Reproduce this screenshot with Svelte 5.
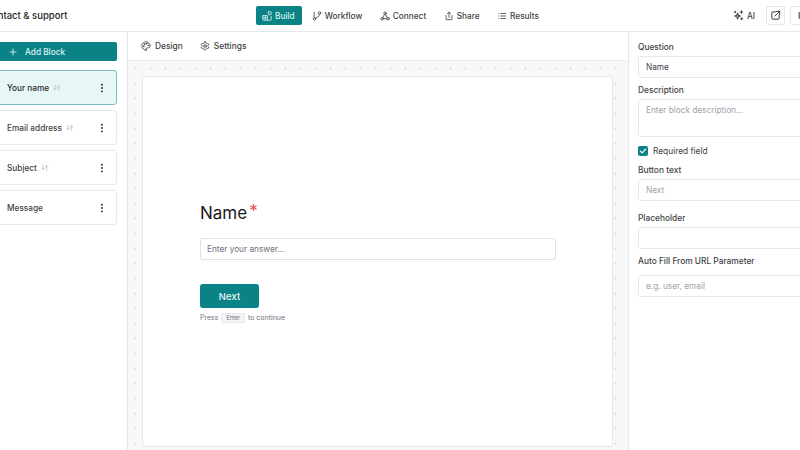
<script lang="ts">
  const tabs = [
    { label: "Build", icon: "build", active: true },
    { label: "Workflow", icon: "workflow", active: false },
    { label: "Connect", icon: "connect", active: false },
    { label: "Share", icon: "share", active: false },
    { label: "Results", icon: "results", active: false },
  ];

  const blocks = [
    { name: "Your name", branch: true, active: true },
    { name: "Email address", branch: true, active: false },
    { name: "Subject", branch: true, active: false },
    { name: "Message", branch: false, active: false },
  ];
</script>

{#snippet tabIcon(kind: string)}
  <svg class="icon" viewBox="0 0 24 24" fill="none" stroke="currentColor" stroke-width="2" stroke-linecap="round" stroke-linejoin="round">
    {#if kind === "build"}
      <rect x="2" y="11" width="11" height="11" rx="1" />
      <path d="M2 16.500h11M7.500 11v11" />
      <rect x="15" y="2" width="7" height="7" rx="1" />
      <path d="M13 22h8a1 1 0 0 0 1-1v-8" />
    {:else if kind === "workflow"}
      <circle cx="6" cy="19" r="3" />
      <circle cx="18" cy="5" r="3" />
      <path d="M5 3v13M18 8c0 5-4 7-9 9" />
    {:else if kind === "connect"}
      <circle cx="12" cy="5.500" r="3" />
      <circle cx="5" cy="18.500" r="3" />
      <circle cx="19" cy="18.500" r="3" />
      <path d="M10.500 8.500 6.500 16M13.500 8.500 17.500 16M8 18.500h8" />
    {:else if kind === "share"}
      <path d="M5 11v9a1 1 0 0 0 1 1h12a1 1 0 0 0 1-1v-9" />
      <path d="M12 15V3M8 6.500 12 3l4 3.500" />
    {:else}
      <path d="M9 6h12M9 12h12M9 18h12M4 6h.01M4 12h.01M4 18h.01" />
    {/if}
  </svg>
{/snippet}

{#snippet branch()}
  <svg class="branch" viewBox="0 0 12 12" fill="none" stroke="currentColor" stroke-width="1.100" stroke-linecap="round" stroke-linejoin="round">
    <path d="M3 1.500v6.500M1.300 6.500 3 8.500l1.700-2M8.500 10c0-2 0-4 0-7M7 4.500 8.500 2.500 10 4.500" />
  </svg>
{/snippet}

{#snippet dots()}
  <svg class="more" viewBox="0 0 12 12" fill="#1f2937">
    <circle cx="6" cy="2" r="1.150" />
    <circle cx="6" cy="6" r="1.150" />
    <circle cx="6" cy="10" r="1.150" />
  </svg>
{/snippet}

<div class="viewport">
  <div class="shell">
    <header class="topbar">
      <div class="title">Contact &amp; support</div>
      <nav class="tabs">
        {#each tabs as tab}
          <button class="tab" class:active={tab.active}>
            {@render tabIcon(tab.icon)}
            <span>{tab.label}</span>
          </button>
        {/each}
      </nav>
      <div class="actions">
        <button class="ai">
          <svg class="icon" viewBox="0 0 24 24" fill="none" stroke="currentColor" stroke-width="2.400" stroke-linecap="round" stroke-linejoin="round">
            <path d="M10 7l1.600 4.400L16 13l-4.400 1.600L10 19l-1.600-4.400L4 13l4.400-1.600z" />
            <path d="M18.500 2v5M16 4.500h5M4.500 3v3M3 4.500h3M19 17v4M17 19h4" />
          </svg>
          <span>AI</span>
        </button>
        <button class="square">
          <svg class="icon" viewBox="0 0 24 24" fill="none" stroke="currentColor" stroke-width="2" stroke-linecap="round" stroke-linejoin="round">
            <path d="M12 4H6a2 2 0 0 0-2 2v12a2 2 0 0 0 2 2h12a2 2 0 0 0 2-2v-6" />
            <path d="M14 3h7v7M21 3 11 13" />
          </svg>
        </button>
        <button class="publish">Upgrade</button>
      </div>
    </header>

    <div class="body">
      <aside class="sidebar">
        <button class="add">
          <svg class="plus" viewBox="0 0 12 12" fill="none" stroke="currentColor" stroke-width="1.300" stroke-linecap="round">
            <path d="M6 1.500v9M1.500 6h9" />
          </svg>
          <span>Add Block</span>
        </button>
        {#each blocks as block}
          <div class="block" class:active={block.active}>
            <span class="block-name">{block.name}</span>
            {#if block.branch}
              {@render branch()}
            {/if}
            {@render dots()}
          </div>
        {/each}
      </aside>

      <main class="center">
        <div class="subbar">
          <button class="sub">
            <svg class="icon" viewBox="0 0 24 24" fill="none" stroke="currentColor" stroke-width="2" stroke-linecap="round" stroke-linejoin="round">
              <path d="M12 22a10 10 0 1 1 10-10c0 3-2.500 4.500-5 4.500h-2.500a2 2 0 0 0-1.500 3.300c.6.8.3 2.200-1 2.200z" />
              <circle cx="13.500" cy="6.500" r="1" fill="currentColor" />
              <circle cx="17.500" cy="10.500" r="1" fill="currentColor" />
              <circle cx="6.500" cy="12.500" r="1" fill="currentColor" />
              <circle cx="8.500" cy="7.500" r="1" fill="currentColor" />
            </svg>
            <span>Design</span>
          </button>
          <button class="sub">
            <svg class="icon" viewBox="0 0 24 24" fill="none" stroke="currentColor" stroke-width="2" stroke-linecap="round" stroke-linejoin="round">
              <path d="M12.200 2h-.4a2 2 0 0 0-2 2v.2a2 2 0 0 1-1 1.700l-.4.300a2 2 0 0 1-2 0l-.2-.1a2 2 0 0 0-2.700.7l-.2.400a2 2 0 0 0 .7 2.700l.2.100a2 2 0 0 1 1 1.700v.5a2 2 0 0 1-1 1.700l-.2.100a2 2 0 0 0-.7 2.700l.2.400a2 2 0 0 0 2.700.7l.2-.1a2 2 0 0 1 2 0l.4.300a2 2 0 0 1 1 1.700v.2a2 2 0 0 0 2 2h.4a2 2 0 0 0 2-2v-.2a2 2 0 0 1 1-1.700l.4-.3a2 2 0 0 1 2 0l.2.100a2 2 0 0 0 2.700-.7l.2-.4a2 2 0 0 0-.7-2.700l-.2-.1a2 2 0 0 1-1-1.700v-.5a2 2 0 0 1 1-1.700l.2-.1a2 2 0 0 0 .7-2.700l-.2-.4a2 2 0 0 0-2.700-.7l-.2.100a2 2 0 0 1-2 0l-.4-.3a2 2 0 0 1-1-1.700V4a2 2 0 0 0-2-2z" />
              <circle cx="12" cy="12" r="3" />
            </svg>
            <span>Settings</span>
          </button>
        </div>
        <div class="canvas">
          <section class="card">
            <h1 class="question">Name<span class="req">*</span></h1>
            <div class="answer">Enter your answer...</div>
            <button class="next">Next</button>
            <p class="hint">Press <kbd>Enter</kbd> to continue</p>
          </section>
        </div>
      </main>

      <aside class="panel">
        <div class="label first">Question</div>
        <div class="field value">Name</div>
        <div class="label desc">Description</div>
        <div class="field area">Enter block description...</div>
        <div class="check">
          <span class="box">
            <svg viewBox="0 0 12 12" fill="none" stroke="#fff" stroke-width="1.500" stroke-linecap="round" stroke-linejoin="round">
              <path d="M2.800 6.200 5 8.300l4.200-4.600" />
            </svg>
          </span>
          <span>Required field</span>
        </div>
        <div class="label btn-text">Button text</div>
        <div class="field">Next</div>
        <div class="label ph">Placeholder</div>
        <div class="field"></div>
        <div class="label auto">Auto Fill From URL Parameter</div>
        <div class="field">e.g. user, email</div>
      </aside>
    </div>
  </div>
</div>

<style>
  :global(body) {
    margin: 0;
    background: #fff;
  }

  .viewport {
    width: 800px;
    height: 450px;
    overflow: hidden;
    font-family: Inter, "Liberation Sans", sans-serif;
    color: #27272a;
  }

  .shell {
    width: 850px;
    height: 450px;
    margin-left: -14px;
    display: flex;
    flex-direction: column;
  }

  button {
    font-family: inherit;
    background: none;
    border: 0;
    padding: 0;
    color: inherit;
    display: flex;
    align-items: center;
  }

  .icon {
    width: 11px;
    height: 11px;
    flex: none;
  }

  .topbar {
    height: 32px;
    box-sizing: border-box;
    border-bottom: 1px solid #e5e7eb;
    display: flex;
    align-items: center;
    position: relative;
    flex: none;
  }

  .title {
    font-size: 9.500px;
    font-weight: 500;
    color: #27272a;
    margin-left: -1px;
    white-space: nowrap;
  }

  .tabs {
    position: absolute;
    left: 270px;
    top: 6px;
    display: flex;
    gap: 10.500px;
  }

  .tab {
    height: 19px;
    gap: 3px;
    font-size: 8.250px;
    font-weight: 500;
    color: #3f3f46;
    padding: 0 7px 0 0;
    border-radius: 2px;
  }

  .tab .icon {
    width: 10px;
    height: 10px;
  }

  .tab.active {
    background: #0b8285;
    color: #d9f3f2;
    padding: 0 7px 0 6px;
    margin-right: -0.500px;
  }

  .actions {
    margin-left: auto;
    display: flex;
    align-items: center;
  }

  .ai {
    font-size: 8.250px;
    font-weight: 500;
    gap: 3px;
    margin-right: 11px;
    color: #3f3f46;
  }

  .square {
    width: 19px;
    height: 19px;
    border: 1px solid #e5e7eb;
    border-radius: 2px;
    box-sizing: border-box;
    justify-content: center;
    margin-right: 5px;
  }

  .publish {
    width: 46px;
    height: 19px;
    border: 1px solid #e5e7eb;
    border-radius: 2px;
    box-sizing: border-box;
    font-size: 8.250px;
    font-weight: 500;
    padding-left: 7px;
    overflow: hidden;
    white-space: nowrap;
  }

  .body {
    flex: 1;
    display: flex;
    min-height: 0;
  }

  .sidebar {
    width: 142px;
    box-sizing: border-box;
    border-right: 1px solid #e5e7eb;
    padding: 10px 10px 0 0;
    display: flex;
    flex-direction: column;
    gap: 5px;
    flex: none;
  }

  .add {
    height: 19px;
    margin-bottom: 4px;
    margin-left: 5px;
    background: #0b8285;
    color: #d9f3f2;
    border-radius: 2px;
    font-size: 8.250px;
    font-weight: 500;
    padding-left: 18px;
    gap: 8px;
  }

  .plus {
    width: 8px;
    height: 8px;
  }

  .block {
    margin-left: 5px;
    height: 35px;
    box-sizing: border-box;
    border: 1px solid #e9eaec;
    border-radius: 3px;
    display: flex;
    align-items: center;
    padding: 0 9px 0 15px;
    font-size: 8.250px;
    font-weight: 500;
    color: #3f3f46;
  }

  .block.active {
    background: #e6f7f6;
    border-color: #7dbdbd;
    color: #27272a;
  }

  .branch {
    width: 8px;
    height: 8px;
    margin-left: 4px;
    color: #b4b4bb;
  }

  .more {
    width: 10px;
    height: 10px;
    margin-left: auto;
  }

  .center {
    width: 501px;
    box-sizing: border-box;
    border-right: 1px solid #e5e7eb;
    display: flex;
    flex-direction: column;
    flex: none;
  }

  .subbar {
    height: 29px;
    box-sizing: border-box;
    border-bottom: 1px solid #eeeeef;
    display: flex;
    align-items: center;
    padding: 0 0 1px 13px;
    gap: 17px;
    flex: none;
  }

  .sub {
    gap: 4px;
    font-size: 8.400px;
    font-weight: 500;
    color: #3f3f46;
  }

  .sub .icon {
    width: 10px;
    height: 10px;
  }

  .canvas {
    flex: 1;
    min-height: 0;
    box-sizing: border-box;
    background-color: #f8f8f8;
    background-image: radial-gradient(circle, #e2e2e2 1px, transparent 1.2px);
    background-size: 15px 15px;
    padding: 15px 15px 3px 14px;
    display: flex;
  }

  .card {
    flex: 1;
    background: #fff;
    border: 1px solid #e5e7eb;
    border-radius: 3px;
    box-sizing: border-box;
    padding: 125px 56px 0 57px;
  }

  .question {
    margin: 0;
    font-size: 17px;
    line-height: 22px;
    font-weight: 400;
    color: #18181b;
  }

  .req {
    color: #e5484d;
    font-size: 17px;
    line-height: 0;
    margin-left: 2px;
    vertical-align: 2px;
  }

  .answer {
    margin-top: 14px;
    height: 22px;
    box-sizing: border-box;
    border: 1px solid #e0e2e6;
    border-radius: 2px;
    display: flex;
    align-items: center;
    padding-left: 6px;
    font-size: 8.250px;
    color: #71717a;
  }

  .next {
    margin-top: 24px;
    width: 59px;
    height: 24px;
    border-radius: 3px;
    background: #0b8285;
    color: #e6f7f7;
    font-size: 9.500px;
    font-weight: 500;
    justify-content: center;
  }

  .hint {
    margin: 5px 0 0;
    font-size: 7px;
    line-height: 10px;
    color: #71717a;
  }

  kbd {
    font-family: inherit;
    font-size: 5.500px;
    background: #f4f4f5;
    border: 1px solid #e5e7eb;
    border-radius: 2px;
    padding: 1px 4px;
    margin: 0 1px;
  }

  .panel {
    flex: 1;
    padding: 10px 0 0 9px;
    min-width: 0;
  }

  .label {
    font-size: 8.350px;
    line-height: 11px;
    font-weight: 500;
    color: #3f3f46;
  }

  .first {
    margin-bottom: 3px;
  }

  .desc {
    margin-top: 7px;
    margin-bottom: 3px;
  }

  .btn-text {
    margin-top: 8.500px;
    margin-bottom: 3px;
  }

  .ph {
    margin-top: 12px;
    margin-bottom: 3px;
  }

  .auto {
    margin-top: 7px;
    margin-bottom: 8px;
  }

  .field {
    height: 22px;
    box-sizing: border-box;
    border: 1px solid #e5e7eb;
    border-radius: 3px;
    display: flex;
    align-items: center;
    padding-left: 7px;
    font-size: 8.250px;
    color: #a1a1aa;
  }

  .field.value {
    color: #3f3f46;
  }

  .field.area {
    height: 38px;
    align-items: flex-start;
    padding-top: 5px;
  }

  .check {
    margin-top: 8.500px;
    display: flex;
    align-items: center;
    gap: 5px;
    font-size: 8.350px;
    line-height: 11px;
    color: #3f3f46;
  }

  .box {
    width: 10px;
    height: 10px;
    border-radius: 2px;
    background: #0b8285;
    display: flex;
  }
</style>
